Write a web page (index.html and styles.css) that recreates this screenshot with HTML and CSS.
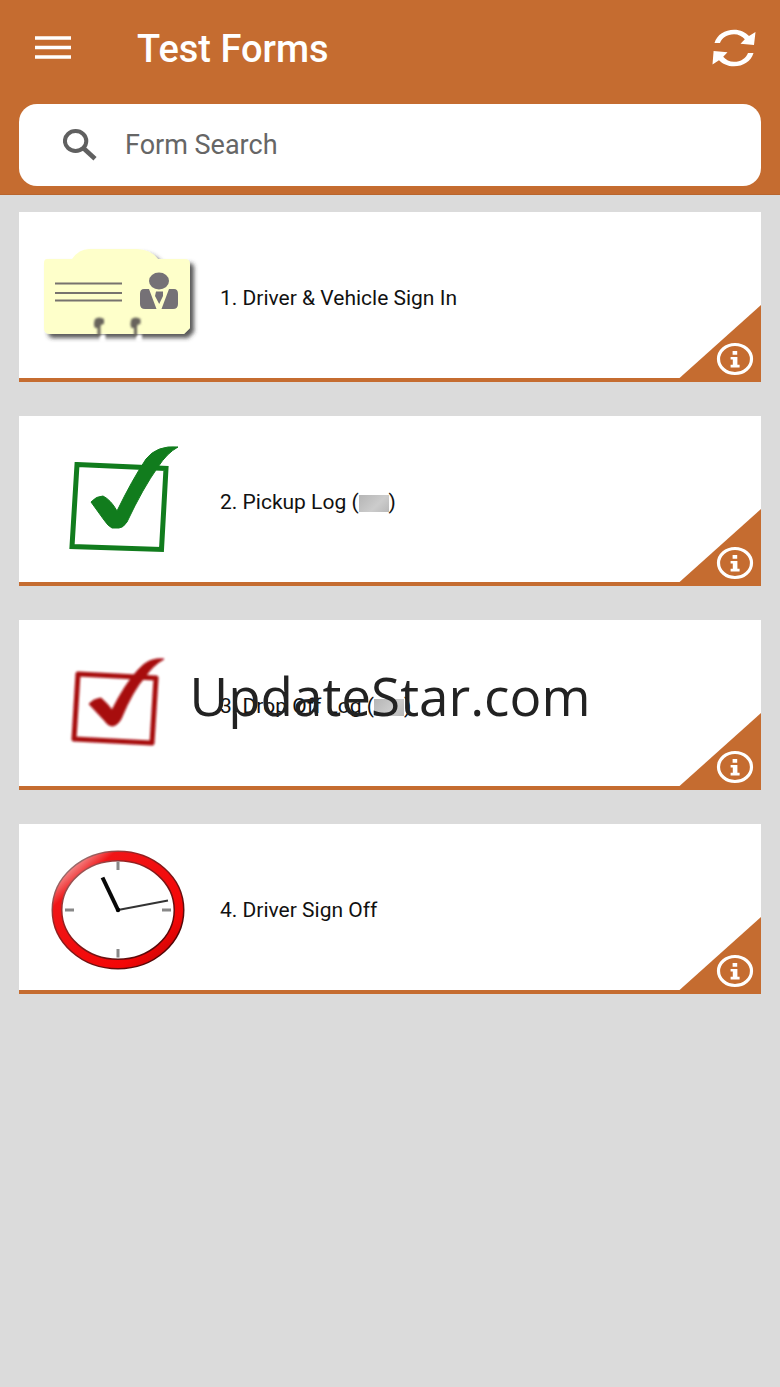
FILE: index.html
```
<!DOCTYPE html>
<html lang="en">
<head>
<meta charset="utf-8">
<meta name="viewport" content="width=device-width, initial-scale=1">
<title>Test Forms</title>
<link rel="stylesheet" href="styles.css">
</head>
<body>
<svg class="defs" aria-hidden="true">
  <symbol id="info" viewBox="0 0 82 77">
    <path d="M0 73.500L82 0V77H0Z" fill="#c56c30"/>
    <ellipse cx="56" cy="54" rx="16.5" ry="14.5" fill="none" stroke="#fff" stroke-width="3.2"/>
    <path d="M53.6 46h4.6v3.8h-4.6zM51.6 52h6.8v7.8h2.2v2.6h-9v-2.6h2.2v-5.2h-2.2z" fill="#fff"/>
  </symbol>
</svg>
<header class="header">
  <div class="bar">
    <button class="icon-button" type="button" aria-label="Menu">
      <svg width="36" height="24" viewBox="0 0 36 24"><path d="M0 2H36M0 11.500H36M0 21H36" stroke="#fff" stroke-width="3.400"/></svg>
    </button>
    <h1 class="title">Test Forms</h1>
    <button class="icon-button" type="button" aria-label="Refresh">
      <svg width="44" height="38" viewBox="0 0 44 38" fill="#fff">
        <path d="M2.500 14C5 5.500 13 .7 22 .7C28.500 .7 33.500 3.300 37 7L43.500 3L42 16L28.500 14.800L32.800 10.200C30.200 7.200 26.500 5.200 22 5.200C15 5.200 9.800 8.800 8 14Z"/>
        <path d="M41.500 24C39 32.500 31 37.300 22 37.300C15.500 37.300 10.500 34.700 7 31.200L.5 35.500L1.600 22L15.500 23.200L11.200 27.800C13.800 30.800 17.500 32.800 22 32.800C29 32.800 34.200 29.200 36 24Z"/>
      </svg>
    </button>
  </div>
  <label class="search">
    <svg width="34" height="32" viewBox="0 0 34 32" fill="none" stroke="#606060"><ellipse cx="12.600" cy="12" rx="10.700" ry="10" stroke-width="4"/><path d="M20.500 19.200L32 29.800" stroke-width="4.600"/></svg>
    <input class="search-input" type="search" placeholder="Form Search" aria-label="Form Search">
  </label>
</header>
<main>
  <ul class="forms">
    <li class="card">
      <a class="form-link" href="#sign-in">
        <svg class="picture" viewBox="0 -1 160 100">
          <defs>
            <filter id="shadow" x="-10%" y="-10%" width="125%" height="130%"><feDropShadow dx="4" dy="4" stdDeviation="2" flood-color="#333" flood-opacity=".8"/></filter>
            <filter id="soft" x="-30%" y="-30%" width="160%" height="160%"><feGaussianBlur stdDeviation=".8"/></filter>
          </defs>
          <path filter="url(#shadow)" fill="#feffca" d="M8 10H33Q40 0 50 0H98Q111 0 119 10H146Q151 10 151 15V79L145 85H11Q5 85 5 79V14Q5 10 8 10Z"/>
          <path d="M16 34.500H83M16 44H83M16 51.500H83" stroke="#77736e" stroke-width="2"/>
          <g fill="#757176"><ellipse cx="120" cy="32" rx="10" ry="8.500"/><path d="M105 40H110L117.500 60H106Q101 60 101 55V45Q101 40 105 40ZM130 40H135Q139 40 139 45V55Q139 60 134 60H122.500ZM117 42.500H124L124 47L120.200 55L116 47Z"/></g>
          <path d="M63.500 85.500V94M100 85.500V94" stroke="#fff" stroke-width="6" filter="url(#soft)"/>
          <path id="notch" filter="url(#soft)" d="M56 70Q60 67 65 70V75Q61 75 61.500 79V87H58.500V79H56Q54 75 56 70Z" fill="#68645b"/>
          <use href="#notch" x="36.500"/>
        </svg>
        <span class="name">1. Driver &amp; Vehicle Sign In</span>
      </a>
      <button class="info" type="button" aria-label="About Driver &amp; Vehicle Sign In"><svg width="82" height="77"><use href="#info"/></svg></button>
    </li>
    <li class="card">
      <a class="form-link" href="#pickup">
        <svg class="picture tall" viewBox="-3 5 160 120">
          <path d="M35 27.500L124 31.500L119.500 112.500L30 109.500Z" fill="none" stroke="#117c1d" stroke-width="5"/>
          <path d="M49 65Q54 59 61 59Q69 63 75 74Q90 43 104 22Q115 8 136 10Q125 16 116 30Q101 51 85 85Q81 91 77 91H70Q66 89 62 83Z" fill="#117c1d" stroke="#117c1d"/>
        </svg>
        <span class="name">2. Pickup Log (<span class="redacted"></span>)</span>
      </a>
      <button class="info" type="button" aria-label="About Pickup Log"><svg width="82" height="77"><use href="#info"/></svg></button>
    </li>
    <li class="card">
      <a class="form-link" href="#drop-off">
        <svg class="picture tall" viewBox="-2 6 160 120">
          <g filter="url(#soft)">
            <path d="M37 34L115 38L111 103L33 99Z" fill="none" stroke="#a70b10" stroke-width="5" stroke-linejoin="round"/>
            <path d="M48 64Q52 59 60 58Q66 63 71 70Q84 44 97 30Q108 17 123 19Q112 25 104 37Q92 50 80 79Q76 86 71 86Q67 86 63 80Z" fill="#a70b10" stroke="#a70b10"/>
          </g>
        </svg>
        <span class="name">3. Drop Off Log (<span class="redacted"></span>)</span>
      </a>
      <button class="info" type="button" aria-label="About Drop Off Log"><svg width="82" height="77"><use href="#info"/></svg></button>
    </li>
    <li class="card">
      <a class="form-link" href="#sign-off">
        <svg class="picture tall" viewBox="-1 1 160 120">
          <defs><linearGradient id="rim" x1="0" y1="0" x2="1" y2="1"><stop offset="0" stop-color="#999"/><stop offset=".3" stop-color="#922"/><stop offset="1" stop-color="#400"/></linearGradient>
          <linearGradient id="red" x1="0" y1="0" x2="1" y2="1"><stop offset=".08" stop-color="#f4aaaa"/><stop offset=".22" stop-color="#f01517"/><stop offset=".78" stop-color="#f40606"/><stop offset="1" stop-color="#b40505"/></linearGradient></defs>
          <ellipse cx="78" cy="61" rx="61" ry="54" fill="#fff" stroke="url(#rim)" stroke-width="11"/>
          <ellipse cx="78" cy="61" rx="61" ry="54" fill="none" stroke="url(#red)" stroke-width="8"/>
          <path d="M78 12.500V21M78 100V108.500M25 61H34M122 61H131" stroke="#888" stroke-width="3"/>
          <path d="M62.500 28.500L78 61" stroke="#080808" stroke-width="4"/><path d="M78 61L128 51.500" stroke="#333" stroke-width="2"/><circle cx="78" cy="61" r="2.200"/>
        </svg>
        <span class="name">4. Driver Sign Off</span>
      </a>
      <button class="info" type="button" aria-label="About Driver Sign Off"><svg width="82" height="77"><use href="#info"/></svg></button>
    </li>
  </ul>
</main>
<div class="watermark">UpdateStar.com</div>
</body>
</html>
```
FILE: styles.css
```
* { box-sizing: border-box; }
body { margin: 0; min-height: 100vh; background: #dbdbdb; font-family: Roboto, sans-serif; color: #111; }
button { padding: 0; border: 0; background: none; cursor: pointer; }
svg { display: block; }
.defs { position: absolute; width: 0; height: 0; }
.header { padding: 0 19px 8px; background: #c56c30; border-bottom: 1px solid #b9652d; }
.bar { display: flex; align-items: center; height: 96px; padding: 0 5px 0 16px; margin-bottom: 8px; }
.icon-button { flex: none; }
.title { flex: 1; margin: 0 0 0 66px; padding-top: 2px; color: #fff; font-size: 38px; font-weight: 500; line-height: 44px; }
.search { display: flex; align-items: center; gap: 28px; height: 82px; padding: 0 24px 0 44px; border-radius: 18px; background: #fff; }
.search-input { flex: 1; min-width: 0; padding: 0; border: 0; outline: 0; background: none; font: 27px/32px Roboto, sans-serif; color: #333; }
.search-input::placeholder { color: #666; opacity: 1; }
.forms { display: grid; gap: 34px; margin: 0; padding: 17px 19px; list-style: none; }
.card { position: relative; border-bottom: 4px solid #c56c30; background: #fff; }
.form-link { display: flex; align-items: center; gap: 21px; min-height: 166px; padding: 6px 90px 0 20px; color: inherit; text-decoration: none; }
.picture { flex: none; width: 160px; height: 100px; }
.tall { height: 120px; }
.name { font-size: 21px; line-height: 28px; }
.redacted { display: inline-block; width: 30px; height: 17px; vertical-align: -3px; background: linear-gradient(135deg, #b5b5b5, #ccc 60%, #b8b8b8); }
.info { position: absolute; right: 0; bottom: -4px; }
.watermark { position: absolute; inset: 0; display: flex; align-items: center; justify-content: center; padding-top: 4px; pointer-events: none; font: 53px/76px "Open Sans", sans-serif; color: #222; }
```
